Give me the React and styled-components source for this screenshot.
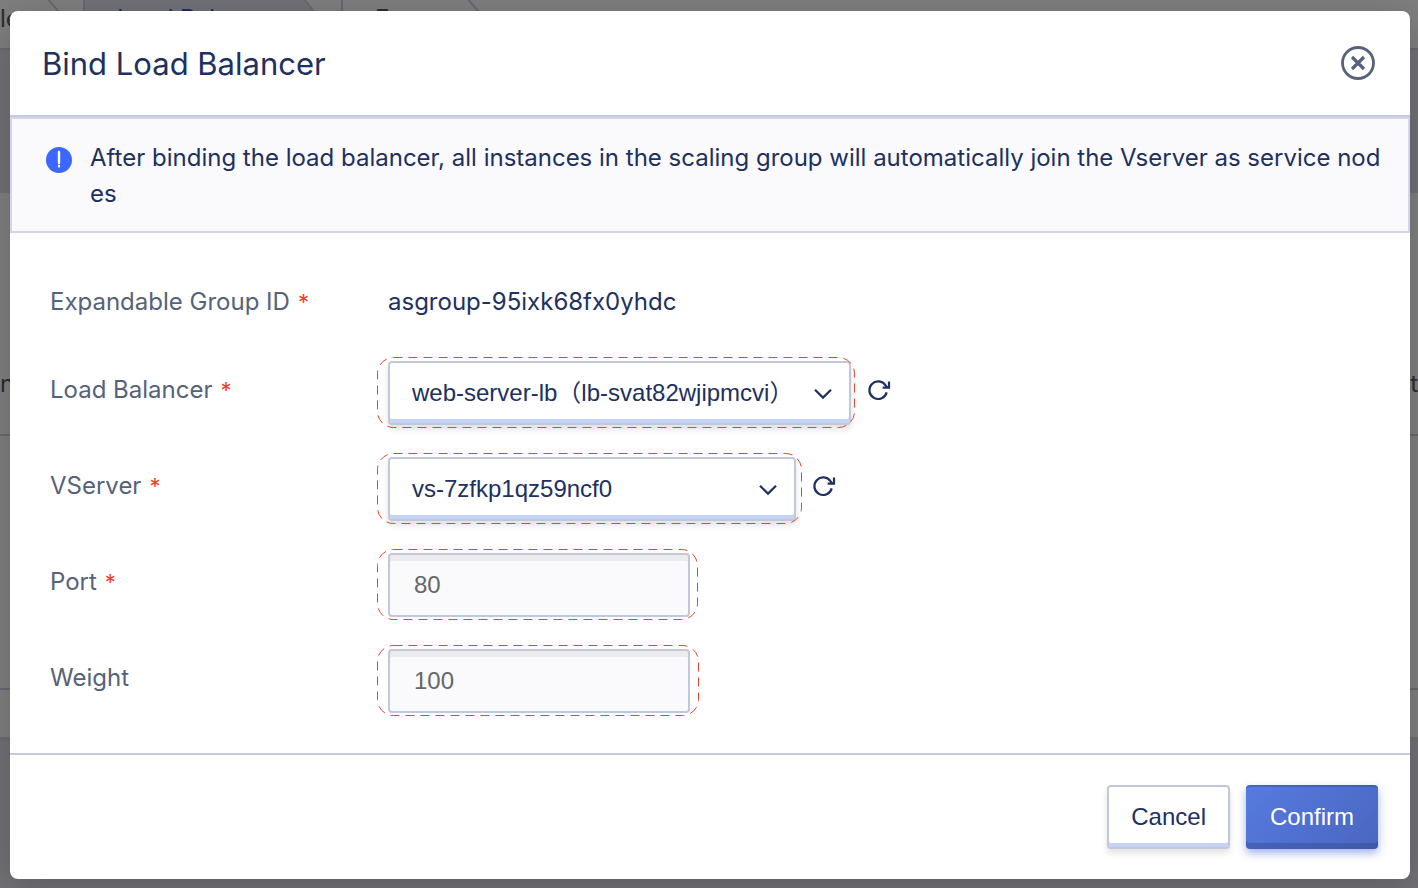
import React from "react";
import styled, { createGlobalStyle, css } from "styled-components";

const sans = `Inter, "Noto Sans CJK SC", sans-serif`;
const control = `"Liberation Sans", "Noto Sans CJK SC", sans-serif`;

const GlobalStyle = createGlobalStyle`
  *, *::before, *::after { box-sizing: border-box; }
  body { margin: 0; font-family: ${sans}; font-size: 24px; color: #20305f; }
`;

const Screen = styled.div`
  position: relative;
  min-height: 100vh;
  overflow: hidden;
  background: #e2e3ec;
`;

const Steps = styled.div`
  display: flex;
  height: 50px;
  background: #fff;
  border-bottom: 2px solid #cfd0e4;
  overflow: hidden;
`;

const Step = styled.div`
  position: relative;
  flex: none;
  width: ${(p) => p.$width}px;
  padding-left: ${(p) => p.$pad}px;
  line-height: 38px;
  color: ${(p) => (p.$active ? "#3a55c8" : "#55596c")};
  svg { position: absolute; top: 0; right: 0; }
  span { position: relative; }
`;

const PageCard = styled.div`
  margin-top: 143px;
  background: #fff;
  border-bottom: 4px solid #dcdce2;
`;

const PageRow = styled.div`
  display: flex;
  justify-content: space-between;
  align-items: flex-end;
  height: ${(p) => p.$height}px;
  padding-bottom: 36px;
  border-bottom: ${(p) => (p.$last ? 0 : 2)}px solid #cfd0e4;
  color: #55596c;
`;

const Overlay = styled.div`
  position: absolute;
  inset: 0;
  padding: 11px 8px 9px 10px;
  background: rgba(0, 0, 0, 0.5);
`;

const Dialog = styled.section`
  background: #fff;
  border-radius: 8px;
  box-shadow: 0 8px 40px rgba(0, 0, 0, 0.2);
`;

const Header = styled.header`
  display: flex;
  align-items: center;
  justify-content: space-between;
  height: 106px;
  padding: 0 35px 0 32px;
  border-bottom: 2px solid #c5c9dc;
`;

const Title = styled.h1`
  margin: 0;
  font-size: 31px;
  font-weight: 400;
`;

const IconButton = styled.button`
  display: flex;
  padding: 0;
  border: 0;
  background: none;
  color: inherit;
  cursor: pointer;
`;

const Notice = styled.div`
  display: flex;
  align-items: flex-start;
  gap: 18px;
  padding: 21px 24px 19px 34px;
  border: 2px solid #d3d6ea;
  background: #fafafd;
  line-height: 36px;
  word-break: break-all;
  p { margin: 0; }
  svg { flex: none; margin-top: 7px; }
`;

const Form = styled.form`
  display: flex;
  flex-direction: column;
  gap: 30px;
  padding: 40px 40px 38px;
`;

const Row = styled.div`
  display: grid;
  grid-template-columns: 338px 1fr;
  align-items: start;
  min-height: ${(p) => (p.$plain ? 58 : 66)}px;
  line-height: 58px;
`;

const Label = styled.label`
  color: #56627a;
`;

const Required = styled.span`
  margin-left: 8px;
  font-size: 22px;
  color: #e8432f;
`;

const Field = styled.div`
  display: flex;
  align-items: flex-start;
  gap: 16px;
`;

const Frame = styled.div`
  position: relative;
  width: ${(p) => p.$width}px;
  height: 64px;
`;

const Marker = styled.span`
  position: absolute;
  top: -4px;
  bottom: -3px;
  left: -11px;
  right: ${(p) => -p.$reach}px;
  pointer-events: none;
  svg { display: block; width: 100%; height: 100%; overflow: visible; }
  rect {
    x: 0.5px;
    y: 0.5px;
    width: calc(100% - 1px);
    height: calc(100% - 1px);
    fill: none;
    stroke: #e8432f;
    stroke-dasharray: 9 6;
  }
`;

const box = css`
  display: block;
  width: 100%;
  height: 64px;
  margin: 0;
  border: 2px solid #c3c7da;
  border-radius: 4px;
  font: 24px ${control};
  outline: none;
`;

const Select = styled.select`
  ${box}
  appearance: none;
  padding: 0 60px 2px 22px;
  background: #fff;
  color: #20305f;
  box-shadow: inset 0 -4px 0 #c5d3f5, 0 4px 6px rgba(0, 0, 0, 0.12);
`;

const Input = styled.input`
  ${box}
  padding: 0 24px;
  background: #fafafd;
  color: #666;
  box-shadow: inset 0 6px 0 #ececee;
`;

const Arrow = styled.svg`
  position: absolute;
  right: 19px;
  top: 27px;
  pointer-events: none;
`;

const Refresh = styled(IconButton)`
  padding-top: 17px;
`;

const Footer = styled.footer`
  display: flex;
  justify-content: flex-end;
  gap: 16px;
  padding: 30px 32px;
  border-top: 2px solid #c5c9dc;
`;

const Button = styled.button`
  height: 64px;
  padding: 0 22px;
  border: 2px solid #c3c7da;
  border-radius: 4px;
  background: #fff;
  color: #20305f;
  font: 24px ${control};
  box-shadow: inset 0 -4px 0 #c5d3f5, 0 4px 6px rgba(0, 0, 0, 0.12);
  cursor: pointer;
  ${(p) => p.$primary && css`
    padding: 0 24px;
    border: 0;
    background: linear-gradient(135deg, #567be0, #4a66bf);
    color: #fff;
    box-shadow: inset 0 -6px 0 rgba(50, 70, 140, 0.4), inset 0 2px 0 rgba(50, 70, 140, 0.4),
      0 4px 8px rgba(70, 100, 220, 0.5);
  `}
`;

function StepShape() {
  return (
    <svg width="258" height="48" viewBox="0 0 258 48" aria-hidden="true">
      <path d="M1 -2V50H205L237 19L220 -2Z" fill="#e2e6f2" stroke="#cfd0e4" strokeWidth="2" />
    </svg>
  );
}

function RefreshIcon() {
  return (
    <svg width="24" height="24" viewBox="0 0 24 24" fill="none" stroke="currentColor" strokeWidth="2.2" aria-hidden="true">
      <path d="M19.7 14.4A8.8 8.8 0 1 1 18.6 7.4L20.4 9.6" />
      <path d="M22 3.4V9.7H15.6" />
    </svg>
  );
}

function DashedFrame({ width, reach, children }) {
  return (
    <Frame $width={width}>
      {children}
      <Marker $reach={reach}>
        <svg aria-hidden="true"><rect rx="16" /></svg>
      </Marker>
    </Frame>
  );
}

function SelectRow({ id, label, value, width, reach }) {
  return (
    <Row>
      <Label htmlFor={id}>{label}<Required>*</Required></Label>
      <Field>
        <DashedFrame width={width} reach={reach}>
          <Select id={id} defaultValue={value}><option>{value}</option></Select>
          <Arrow width="18" height="12" viewBox="0 0 18 12" fill="none" stroke="currentColor" strokeWidth="2.2" aria-hidden="true">
            <path d="M1 1.8L9 9.6L17 1.8" />
          </Arrow>
        </DashedFrame>
        <Refresh type="button" aria-label={`Refresh ${label}`}><RefreshIcon /></Refresh>
      </Field>
    </Row>
  );
}

function InputRow({ id, label, value, required, reach }) {
  return (
    <Row>
      <Label htmlFor={id}>{label}{required && <Required>*</Required>}</Label>
      <DashedFrame width={302} reach={reach}>
        <Input id={id} defaultValue={value} />
      </DashedFrame>
    </Row>
  );
}

export default function App() {
  return (
    <Screen>
      <GlobalStyle />
      <div aria-hidden="true">
        <Steps>
          <Step $width={83} $pad={0}>
            <svg width="83" height="48" viewBox="0 0 83 48"><path d="M47 -2L65 19L33 50" fill="none" stroke="#cfd0e4" strokeWidth="2" /></svg>
            <span>le</span>
          </Step>
          <Step $width={258} $pad={34} $active><StepShape /><span>Load Balancer</span></Step>
          <Step $width={258} $pad={34}>
            <svg width="258" height="48" viewBox="0 0 258 48"><path d="M1 50V-2H126L144 19L112 50" fill="none" stroke="#cfd0e4" strokeWidth="2" /></svg>
            <span>E</span>
          </Step>
        </Steps>
        <PageCard>
          <PageRow $height={243}><span>n</span><span>t</span></PageRow>
          <PageRow $height={254} />
          <PageRow $height={47} $last />
        </PageCard>
      </div>
      <Overlay>
        <Dialog role="dialog" aria-labelledby="title">
          <Header>
            <Title id="title">Bind Load Balancer</Title>
            <IconButton type="button" aria-label="Close">
              <svg width="34" height="34" viewBox="0 0 34 34" fill="none" stroke="#56627a" aria-hidden="true">
                <circle cx="17" cy="17" r="15.5" strokeWidth="2.8" />
                <path d="M11 11L23 23M23 11L11 23" strokeWidth="3.2" />
              </svg>
            </IconButton>
          </Header>
          <Notice>
            <svg width="26" height="26" viewBox="0 0 26 26" aria-hidden="true">
              <circle cx="13" cy="13" r="13" fill="#3b68fa" />
              <path d="M13 5V16M13 19V19.2" stroke="#fff" strokeWidth="2.4" strokeLinecap="round" />
            </svg>
            <p>After binding the load balancer, all instances in the scaling group will automatically join the Vserver as service nodes</p>
          </Notice>
          <Form>
            <Row $plain>
              <Label as="span">Expandable Group ID<Required>*</Required></Label>
              <span>asgroup-95ixk68fx0yhdc</span>
            </Row>
            <SelectRow id="lb" label="Load Balancer" value="web-server-lb（lb-svat82wjipmcvi）" width={463} reach={4} />
            <SelectRow id="vserver" label="VServer" value="vs-7zfkp1qz59ncf0" width={408} reach={6} />
            <InputRow id="port" label="Port" value="80" required reach={8} />
            <InputRow id="weight" label="Weight" value="100" reach={9} />
          </Form>
          <Footer>
            <Button type="button">Cancel</Button>
            <Button type="button" $primary>Confirm</Button>
          </Footer>
        </Dialog>
      </Overlay>
    </Screen>
  );
}
